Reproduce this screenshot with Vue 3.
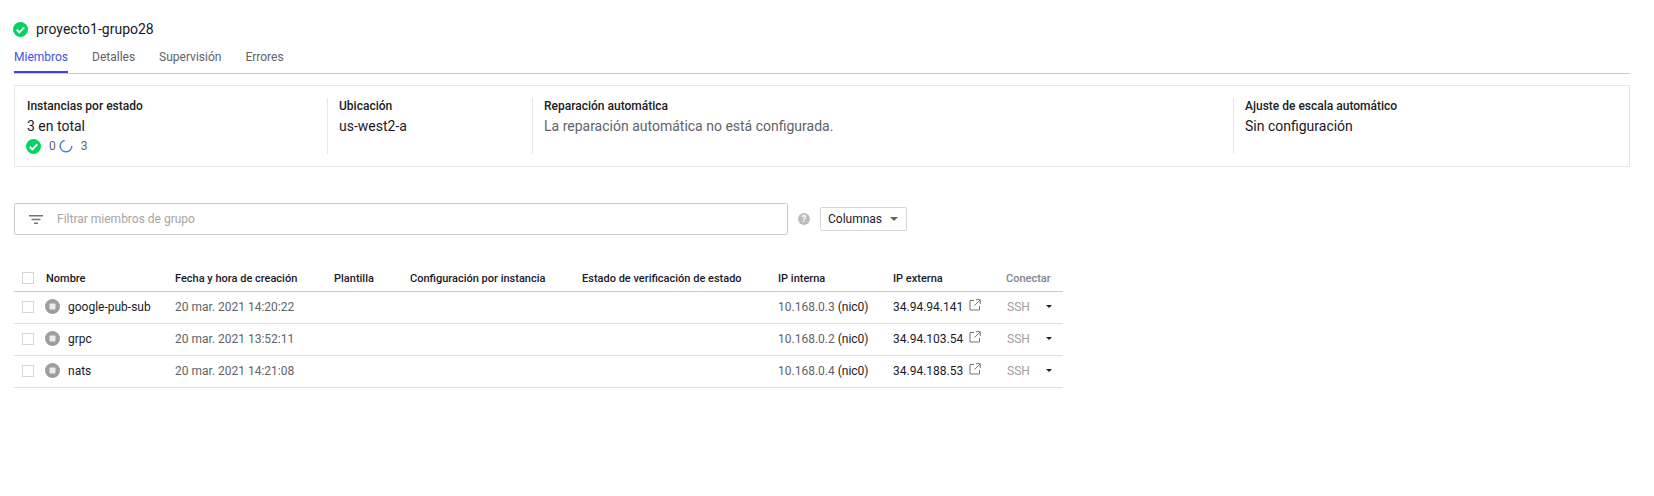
<template>
  <div class="page">
    <header class="title">
      <svg class="ok" viewBox="0 0 16 16" width="15" height="15">
        <circle cx="8" cy="8" r="8" fill="#00d65f" />
        <path d="M4 8.3l2.8 2.8L12 5.8" fill="none" stroke="#fff" stroke-width="2" />
      </svg>
      <span>proyecto1-grupo28</span>
    </header>

    <nav class="tabs">
      <a v-for="(tab, i) in tabs" :key="tab" class="tab" :class="{ active: i === 0 }">{{ tab }}</a>
    </nav>

    <section class="summary">
      <div class="block">
        <div class="label">Instancias por estado</div>
        <div class="value">3 en total</div>
        <div class="states">
          <svg class="state-ok" viewBox="0 0 16 16" width="15" height="15">
            <circle cx="8" cy="8" r="8" fill="#00d65f" />
            <path d="M4 8.3l2.8 2.8L12 5.8" fill="none" stroke="#fff" stroke-width="2" />
          </svg>
          <span class="num first">0</span>
          <svg class="spin" viewBox="0 0 14 14" width="14" height="14">
            <path d="M5.6 1.4A5.8 5.8 0 1 0 12.8 7" fill="none" stroke="#4d7cf0" stroke-width="1.5" />
          </svg>
          <span class="num">3</span>
        </div>
      </div>
      <div class="block">
        <div class="label">Ubicación</div>
        <div class="value">us-west2-a</div>
      </div>
      <div class="block">
        <div class="label">Reparación automática</div>
        <div class="value muted">La reparación automática no está configurada.</div>
      </div>
      <div class="block">
        <div class="label">Ajuste de escala automático</div>
        <div class="value">Sin configuración</div>
      </div>
    </section>

    <div class="toolbar">
      <div class="filter">
        <svg viewBox="0 0 14 9" width="14" height="9">
          <path d="M0 0h14v1.4H0zM2.5 3.8h9v1.4h-9zM5 7.6h4V9H5z" fill="#757575" />
        </svg>
        <span>Filtrar miembros de grupo</span>
      </div>
      <svg class="help" viewBox="0 0 12 12" width="12" height="12">
        <circle cx="6" cy="6" r="6" fill="#bdbdbd" />
        <text x="6" y="9.2" text-anchor="middle" class="help-mark">?</text>
      </svg>
      <button class="columns">
        Columnas
        <i class="caret"></i>
      </button>
    </div>

    <table class="members">
      <colgroup>
        <col v-for="w in widths" :key="w.id" :style="{ width: w.px + 'px' }" />
      </colgroup>
      <thead>
        <tr>
          <th class="check"><span class="box"></span></th>
          <th>Nombre</th>
          <th>Fecha y hora de creación</th>
          <th>Plantilla</th>
          <th>Configuración por instancia</th>
          <th>Estado de verificación de estado</th>
          <th>IP interna</th>
          <th>IP externa</th>
          <th class="connect-head">Conectar</th>
        </tr>
      </thead>
      <tbody>
        <tr v-for="row in rows" :key="row.name">
          <td class="check"><span class="box"></span></td>
          <td>
            <div class="name">
              <svg viewBox="0 0 15 15" width="15" height="15">
                <circle cx="7.5" cy="7.5" r="7.5" fill="#9e9e9e" />
                <rect x="4.5" y="4.5" width="6" height="6" rx="1" fill="#ececec" />
              </svg>
              <span>{{ row.name }}</span>
            </div>
          </td>
          <td class="grey">{{ row.date }}</td>
          <td></td>
          <td></td>
          <td></td>
          <td class="grey">{{ row.ip }} <span class="dark">(nic0)</span></td>
          <td>
            <div class="external">
              <span>{{ row.ext }}</span>
              <svg viewBox="0 0 12 12" width="12" height="12">
                <path d="M5 1.5H1v9.5h9.5V7M7 .7h4.3V5M11.1 1L5.5 6.6" fill="none" stroke="#757575" stroke-width="1" />
              </svg>
            </div>
          </td>
          <td>
            <div class="ssh">
              <span>SSH</span>
              <i class="caret small"></i>
            </div>
          </td>
        </tr>
      </tbody>
    </table>
  </div>
</template>

<script setup>
const tabs = ['Miembros', 'Detalles', 'Supervisión', 'Errores']

const widths = [
  { id: 'check', px: 32 },
  { id: 'name', px: 129 },
  { id: 'date', px: 159 },
  { id: 'template', px: 76 },
  { id: 'config', px: 172 },
  { id: 'health', px: 196 },
  { id: 'internal', px: 115 },
  { id: 'external', px: 113 },
  { id: 'connect', px: 57 }
]

const rows = [
  { name: 'google-pub-sub', date: '20 mar. 2021 14:20:22', ip: '10.168.0.3', ext: '34.94.94.141' },
  { name: 'grpc', date: '20 mar. 2021 13:52:11', ip: '10.168.0.2', ext: '34.94.103.54' },
  { name: 'nats', date: '20 mar. 2021 14:21:08', ip: '10.168.0.4', ext: '34.94.188.53' }
]
</script>

<style>
html, body {
  margin: 0;
  background: #fff;
}
</style>

<style scoped>
.page {
  width: 1654px;
  height: 496px;
  box-sizing: border-box;
  padding: 21px 24px 0 14px;
  font-family: Roboto, "Liberation Sans", sans-serif;
  color: #202124;
  overflow: hidden;
}
.title {
  display: flex;
  align-items: center;
  gap: 8px;
  height: 16px;
  font-size: 14px;
  color: #1a1a2a;
  margin-left: -1px;
}
.tabs {
  display: flex;
  gap: 24px;
  height: 36px;
  border-bottom: 1px solid #ccc;
}
.tab {
  font-size: 12px;
  line-height: 40px;
  color: #5f6368;
  height: 36px;
  box-sizing: border-box;
}
.tab.active {
  color: #3f51e8;
  border-bottom: 2px solid #4a3fe0;
}
.summary {
  display: grid;
  grid-template-columns: 312px 205px 701px 1fr;
  margin: 11px 0 0 0;
  height: 82px;
  box-sizing: border-box;
  padding: 12px 0;
  border: 1px solid #e6e6e6;
}
.block {
  padding: 0 12px 0 11px;
  border-left: 1px solid #e6e6e6;
}
.block:first-child {
  padding-left: 12px;
  border-left: 0;
}
.label {
  font-size: 12px;
  font-weight: 500;
  line-height: 16px;
  color: #202124;
}
.value {
  font-size: 14px;
  line-height: 20px;
  margin-top: 2px;
  color: #1a1a2a;
}
.value.muted {
  color: #5f6368;
}
.states {
  display: flex;
  align-items: center;
  height: 16px;
  margin-top: 2px;
  font-size: 12px;
  color: #5f6368;
}
.state-ok {
  margin-left: -1px;
}
.num.first {
  margin-left: 8px;
}
.spin {
  margin-left: 3px;
  margin-right: 8px;
}
.toolbar {
  display: flex;
  align-items: center;
  margin: 36px 0 0 0;
  height: 32px;
}
.filter {
  display: flex;
  align-items: center;
  gap: 14px;
  width: 774px;
  height: 32px;
  box-sizing: border-box;
  padding-left: 14px;
  border: 1px solid #ccc;
  border-radius: 2px;
  font-size: 12px;
  color: #a8a4a4;
}
.help {
  margin-left: 10px;
}
.help-mark {
  font-size: 9px;
  font-weight: 700;
  fill: #fff;
}
.columns {
  display: flex;
  align-items: center;
  justify-content: space-between;
  width: 87px;
  height: 24px;
  margin-left: 10px;
  padding: 0 8px 0 7px;
  background: #fff;
  border: 1px solid #d5d5d5;
  border-radius: 2px;
  font-family: inherit;
  font-size: 12px;
  color: #1a1a2a;
}
.caret {
  width: 0;
  height: 0;
  border-left: 4px solid transparent;
  border-right: 4px solid transparent;
  border-top: 4px solid #616161;
}
.caret.small {
  border-left-width: 3px;
  border-right-width: 3px;
  border-top: 3px solid #202124;
}
.members {
  table-layout: fixed;
  width: 1049px;
  margin-top: 30px;
  border-collapse: collapse;
  font-size: 12px;
}
th {
  height: 26px;
  padding: 0;
  text-align: left;
  font-size: 11px;
  font-weight: 500;
  color: #1a1a2a;
  border-bottom: 1px solid #ccc;
}
th.connect-head {
  color: #80868b;
}
td {
  height: 32px;
  box-sizing: border-box;
  padding: 0 0 2px;
  border-bottom: 1px solid #e0e0e0;
  color: #1a1a2a;
}
.check {
  padding-left: 8px;
}
.box {
  display: block;
  width: 10px;
  height: 10px;
  border: 1px solid #d5d5d5;
}
.name {
  display: flex;
  align-items: center;
  gap: 8px;
  margin-left: -1px;
}
.grey {
  color: #5f6368;
}
.dark {
  color: #1a1a2a;
}
.external {
  display: flex;
  align-items: center;
  gap: 6px;
  white-space: nowrap;
}
.external svg {
  margin-top: -3px;
}
.ssh {
  display: flex;
  align-items: center;
  justify-content: space-between;
  padding: 0 11px 0 1px;
  color: #9e9e9e;
}
</style>
